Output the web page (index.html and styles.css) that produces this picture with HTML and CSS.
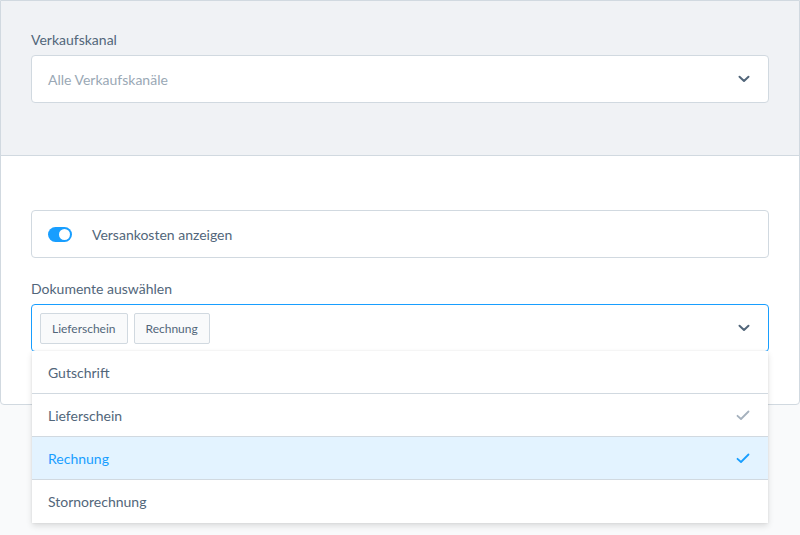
FILE: index.html
```html
<!DOCTYPE html>
<html lang="de">
<head>
<meta charset="utf-8">
<link rel="stylesheet" href="styles.css">
</head>
<body>
<div class="card">
  <div class="card-head">
    <div class="field">
      <div class="label">Verkaufskanal</div>
      <div class="select">
        <span class="placeholder">Alle Verkaufskanäle</span>
        <svg class="chev" width="12" height="8" viewBox="0 0 12 8"><path d="M1.5 1.8 6 6 10.5 1.8" fill="none" stroke="#52667a" stroke-width="2" stroke-linecap="round" stroke-linejoin="round"/></svg>
      </div>
    </div>
  </div>
  <div class="card-body">
    <div class="switch-field">
      <span class="toggle"><span class="knob"></span></span>
      <span class="switch-label">Versankosten anzeigen</span>
    </div>
    <div class="field field-docs">
      <div class="label">Dokumente auswählen</div>
      <div class="multi">
        <div class="tags">
          <span class="tag">Lieferschein</span>
          <span class="tag">Rechnung</span>
        </div>
        <svg class="chev" width="12" height="8" viewBox="0 0 12 8"><path d="M1.5 1.8 6 6 10.5 1.8" fill="none" stroke="#52667a" stroke-width="2" stroke-linecap="round" stroke-linejoin="round"/></svg>
        <ul class="dropdown">
          <li class="opt">Gutschrift</li>
          <li class="opt">Lieferschein<svg class="check" width="14" height="11" viewBox="0 0 14 11"><path d="M1.5 5.8 5 9 12.5 1.5" fill="none" stroke="#a5b1bd" stroke-width="1.8" stroke-linecap="round" stroke-linejoin="round"/></svg></li>
          <li class="opt active">Rechnung<svg class="check" width="14" height="11" viewBox="0 0 14 11"><path d="M1.5 5.8 5 9 12.5 1.5" fill="none" stroke="#189eff" stroke-width="1.8" stroke-linecap="round" stroke-linejoin="round"/></svg></li>
          <li class="opt">Stornorechnung</li>
        </ul>
      </div>
    </div>
  </div>
</div>
</body>
</html>
```
FILE: styles.css
```css
* { box-sizing: border-box; }
html, body { margin: 0; padding: 0; }
body {
  background: #f9fafb;
  font-family: "Source Sans Pro", Lato, "Noto Sans", sans-serif;
  font-size: 14px;
  color: #52667a;
  width: 800px;
  height: 535px;
  overflow: hidden;
}
.card {
  width: 800px;
  border: 1px solid #d1d9e0;
  border-radius: 0 0 4px 4px;
  background: #fff;
}
.card-head {
  background: #f0f2f5;
  padding: 29px 30px 52px 30px;
  border-bottom: 1px solid #d1d9e0;
}
.label {
  font-size: 14px;
  line-height: 20px;
  color: #52667a;
  margin-bottom: 5px;
}
.select, .multi {
  height: 48px;
  background: #fff;
  border: 1px solid #d1d9e0;
  border-radius: 4px;
  display: flex;
  align-items: center;
  justify-content: space-between;
  padding: 0 18px 0 16px;
}
.placeholder { color: #9aa8b5; font-size: 14px; }
.chev { display: block; }
.card-body {
  padding: 54px 30px 52px 30px;
}
.switch-field {
  height: 48px;
  border: 1px solid #d1d9e0;
  border-radius: 4px;
  display: flex;
  align-items: center;
  padding: 0 16px;
  gap: 20px;
}
.toggle {
  width: 24px;
  height: 15px;
  border-radius: 8px;
  background: #189eff;
  position: relative;
  display: block;
}
.knob {
  position: absolute;
  right: 2px;
  top: 2px;
  width: 11px;
  height: 11px;
  border-radius: 50%;
  background: #fff;
}
.switch-label { font-size: 14px; color: #52667a; }
.field-docs { margin-top: 21px; }
.multi {
  border-color: #189eff;
  padding-left: 8px;
  position: relative;
}
.tags { display: flex; gap: 6px; }
.tag {
  height: 31px;
  line-height: 29px;
  padding: 0 11px;
  font-size: 12px;
  color: #52667a;
  background: #f9fafb;
  border: 1px solid #d1d9e0;
  border-radius: 2px;
}
.dropdown {
  position: absolute;
  left: 0;
  right: 0;
  top: 46px;
  margin: 0;
  padding: 0;
  list-style: none;
  background: #fff;
  box-shadow: 0 3px 6px rgba(0, 0, 0, 0.12), 0 0 2px rgba(0, 0, 0, 0.08);
  z-index: 5;
}
.opt {
  height: 43px;
  border-bottom: 1px solid #d1d9e0;
  display: flex;
  align-items: center;
  justify-content: space-between;
  padding: 0 18px 0 16px;
  font-size: 14px;
  color: #52667a;
}
.opt:last-child { border-bottom: none; }
.opt.active { background: #e3f3ff; color: #189eff; }
.check { display: block; }
```
